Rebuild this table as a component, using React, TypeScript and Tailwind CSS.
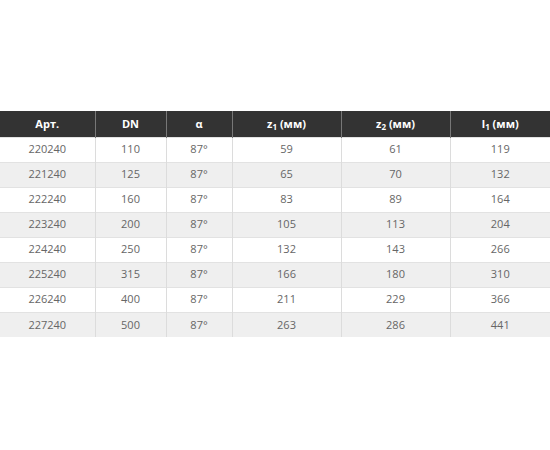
import React from "react";

const rows = [
  ["220240", "110", "87°", "59", "61", "119"],
  ["221240", "125", "87°", "65", "70", "132"],
  ["222240", "160", "87°", "83", "89", "164"],
  ["223240", "200", "87°", "105", "113", "204"],
  ["224240", "250", "87°", "132", "143", "266"],
  ["225240", "315", "87°", "166", "180", "310"],
  ["226240", "400", "87°", "211", "229", "366"],
  ["227240", "500", "87°", "263", "286", "441"],
];

const widths = ["w-[95px]", "w-[71px]", "w-[66px]", "w-[109px]", "w-[109px]", "w-[100px]"];

export default function App() {
  return (
    <div className="w-[550px] h-[450px] bg-white pt-[111px]" style={{ fontFamily: '"Open Sans", sans-serif' }}>
      <table className="w-[550px] border-collapse table-fixed">
        <colgroup>
          {widths.map((w, i) => (
            <col key={i} className={w} />
          ))}
        </colgroup>
        <thead>
          <tr className="h-[26px] bg-[#333333] text-white text-[11px] font-bold">
            <th className="border-r border-[#777]">Арт.</th>
            <th className="border-r border-[#777]">DN</th>
            <th className="border-r border-[#777]">α</th>
            <th className="border-r border-[#777]">z<sub className="text-[8px]">1</sub> (мм)</th>
            <th className="border-r border-[#777]">z<sub className="text-[8px]">2</sub> (мм)</th>
            <th>l<sub className="text-[8px]">1</sub> (мм)</th>
          </tr>
        </thead>
        <tbody>
          {rows.map((r, i) => (
            <tr
              key={i}
              className={`h-[25px] text-[11px] text-[#666] ${i % 2 === 1 ? "bg-[#efefef]" : "bg-white"} border-t border-[#e2e2e2]`}
            >
              {r.map((c, j) => (
                <td key={j} className={`text-center ${j < 5 ? "border-r border-[#dcdcdc]" : ""}`}>
                  {c}
                </td>
              ))}
            </tr>
          ))}
        </tbody>
      </table>
    </div>
  );
}
